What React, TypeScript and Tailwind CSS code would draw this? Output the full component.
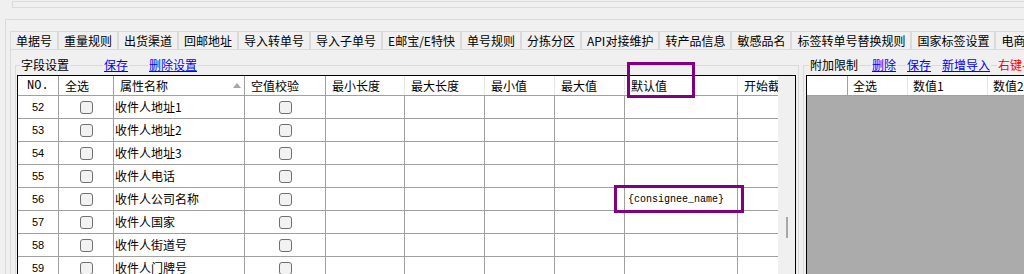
const cjk = "font-['Noto_Sans_CJK_SC',sans-serif]"

const tabs = [
  '单据号',
  '重量规则',
  '出货渠道',
  '回邮地址',
  '导入转单号',
  '导入子单号',
  'E邮宝/E特快',
  '单号规则',
  '分拣分区',
  'API对接维护',
  '转产品信息',
  '敏感品名',
  '标签转单号替换规则',
  '国家标签设置',
  '电商平台',
]

type Col = { label: string; w: string; frozen?: boolean }

// widths include the 1px right border of each cell
const cols: Col[] = [
  { label: 'NO.', w: 'w-[41px]', frozen: true },
  { label: '全选', w: 'w-[55px]', frozen: true },
  { label: '属性名称', w: 'w-[131px]', frozen: true },
  { label: '空值校验', w: 'w-[81px]', frozen: true },
  { label: '最小长度', w: 'w-[79px]' },
  { label: '最大长度', w: 'w-[80px]' },
  { label: '最小值', w: 'w-[70px]' },
  { label: '最大值', w: 'w-[70px]' },
  { label: '默认值', w: 'w-[113px]' },
  { label: '开始截取', w: 'w-[100px]' },
]

const rows = [
  { no: 52, name: '收件人地址1' },
  { no: 53, name: '收件人地址2' },
  { no: 54, name: '收件人地址3' },
  { no: 55, name: '收件人电话' },
  { no: 56, name: '收件人公司名称', def: '{consignee_name}' },
  { no: 57, name: '收件人国家' },
  { no: 58, name: '收件人街道号' },
  { no: 59, name: '收件人门牌号' },
]

function CheckBox() {
  return <div className="h-[13px] w-[13px] rounded-[3px] border border-[#707070] bg-[#f2f2f2]" />
}

function SortArrow() {
  return (
    <svg width="8" height="5" viewBox="0 0 8 5" className="ml-auto mr-[3px] shrink-0">
      <path d="M0 5 L4 0 L8 5 Z" fill="#a6a6a6" />
    </svg>
  )
}

function FieldTable() {
  return (
    <div className="flex w-[779px] border-l border-t border-r border-black">
      <div className="w-[760px] overflow-hidden">
        {/* 表头 */}
        <div className="flex h-[20px] w-[900px] border-b border-[#a0a0a0] bg-white">
          {cols.map((c, i) => (
            <div
              key={c.label}
              className={`${c.w} flex shrink-0 items-center border-r pl-[6px] text-[12px] leading-[14px] text-black ${
                c.frozen ? 'border-[#a0a0a0]' : 'border-[#e6e6e6]'
              } ${i === 0 ? "pl-[9px] font-['Liberation_Mono',monospace] text-[11px]" : cjk}`}
            >
              {c.label}
              {i === 2 && <SortArrow />}
            </div>
          ))}
        </div>
        {/* 数据行 */}
        {rows.map((r) => (
          <div key={r.no} className="flex h-[23px] w-[900px] border-b border-[#a0a0a0] bg-white">
            <div className="flex w-[41px] shrink-0 items-center justify-center border-r border-[#a0a0a0] font-['Liberation_Sans',sans-serif] text-[11px] text-black">
              {r.no}
            </div>
            <div className="flex w-[55px] shrink-0 items-center justify-center border-r border-[#a0a0a0]">
              <CheckBox />
            </div>
            <div className={`flex w-[131px] shrink-0 items-center border-r border-[#a0a0a0] pl-[1px] text-[12px] text-black ${cjk}`}>
              {r.name}
            </div>
            <div className="flex w-[81px] shrink-0 items-center justify-center border-r border-[#a0a0a0]">
              <CheckBox />
            </div>
            <div className="w-[79px] shrink-0 border-r border-[#a0a0a0]" />
            <div className="w-[80px] shrink-0 border-r border-[#a0a0a0]" />
            <div className="w-[70px] shrink-0 border-r border-[#a0a0a0]" />
            <div className="w-[70px] shrink-0 border-r border-[#a0a0a0]" />
            <div className="flex w-[113px] shrink-0 items-center border-r border-[#a0a0a0] pl-[3px] font-['Liberation_Mono',monospace] text-[10px] text-black">
              {r.def}
            </div>
            <div className="w-[100px] shrink-0 border-r border-[#a0a0a0]" />
          </div>
        ))}
      </div>
      {/* 滚动条 */}
      <div className="w-[17px] shrink-0 bg-[#f0f0f0] pt-[141px]">
        <div className="ml-[8px] h-[21px] w-[2px] bg-[#a8a8a8]" />
      </div>
    </div>
  )
}

function LimitTable() {
  return (
    <div className="ml-[2px] mt-[3px] border-l border-t border-black">
      <div className={`flex h-[20px] border-b border-[#a0a0a0] bg-white text-[12px] text-black ${cjk}`}>
        <div className="w-[41px] shrink-0 border-r border-[#a0a0a0]" />
        <div className="flex w-[60px] shrink-0 items-center border-r border-[#e6e6e6] pl-[5px]">全选</div>
        <div className="flex w-[80px] shrink-0 items-center border-r border-[#e6e6e6] pl-[5px]">数值1</div>
        <div className="flex w-[80px] shrink-0 items-center border-r border-[#e6e6e6] pl-[5px]">数值2</div>
      </div>
      <div className="h-[200px] bg-[#ababab]" />
    </div>
  )
}

export default function App() {
  return (
    <div className={`relative h-[274px] w-[1024px] overflow-hidden bg-[#f0f0f0] ${cjk}`}>
      {/* 上方面板底边 */}
      <div className="ml-[12px] mt-[1px] h-[7px] border-l border-t border-b border-[#dadada]" />

      <div className="ml-[5px] mt-[11px] w-[1100px] border-l border-t border-[#dadada] pl-[4px] pt-[11px]">
        {/* 选项卡 */}
        <div className="flex h-[18px]">
          {tabs.map((t) => (
            <div
              key={t}
              className="flex shrink-0 items-center border-l border-t border-r border-[#dadada] bg-[#f0f0f0] px-[5px] text-[12px] leading-[14px] text-black"
            >
              {t}
            </div>
          ))}
        </div>

        {/* 选项卡页 */}
        <div className="h-[260px] border-l border-t border-[#dadada] pl-[4px] pt-[15px]">
          <div className="flex">
            {/* 字段设置 */}
            <div className="w-[784px] shrink-0 border-l border-t border-r border-[#dadada] pl-[1px] pr-[2px]">
              <div className="-mt-[8px] flex h-[14px] items-center text-[12px] leading-[14px]">
                <span className="ml-[3px] bg-[#f0f0f0] px-[1px] text-black">字段设置</span>
                <span className="ml-[33px] bg-[#f0f0f0] px-[1px] text-[#0000ff] underline">保存</span>
                <span className="ml-[19px] bg-[#f0f0f0] px-[1px] text-[#0000ff] underline">删除设置</span>
              </div>
              <div className="mt-[3px]">
                <FieldTable />
              </div>
            </div>

            {/* 附加限制 */}
            <div className="ml-[4px] flex-1 border-l border-t border-[#dadada]">
              <div className="-mt-[8px] flex h-[14px] items-center text-[12px] leading-[14px]">
                <span className="ml-[5px] bg-[#f0f0f0] px-[1px] text-black">附加限制</span>
                <span className="ml-[12px] bg-[#f0f0f0] px-[1px] text-[#0000ff] underline">删除</span>
                <span className="ml-[9px] bg-[#f0f0f0] px-[1px] text-[#0000ff] underline">保存</span>
                <span className="ml-[9px] bg-[#f0f0f0] px-[1px] text-[#0000ff] underline">新增导入</span>
                <span className="ml-[6px] bg-[#f0f0f0] px-[1px] text-[#ff0000]">右键-</span>
              </div>
              <LimitTable />
            </div>
          </div>
        </div>
      </div>

      {/* 标注框 */}
      <div className="absolute left-[627px] top-[62px] h-[36px] w-[68px] border-[3px] border-[#800080]" />
      <div className="absolute left-[614px] top-[185px] h-[28px] w-[130px] border-[3px] border-[#800080]" />
    </div>
  )
}
